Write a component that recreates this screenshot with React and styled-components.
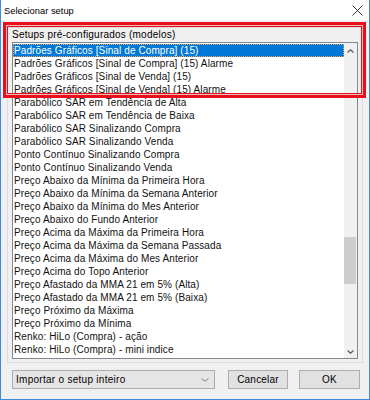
import React from "react";
import styled, { createGlobalStyle } from "styled-components";

const Global = createGlobalStyle`
  html, body { margin: 0; padding: 0; background: #f0f0f0; }
  * { box-sizing: border-box; }
`;

const items = [
  "Padrões Gráficos [Sinal de Compra] (15)",
  "Padrões Gráficos [Sinal de Compra] (15) Alarme",
  "Padrões Gráficos [Sinal de Venda] (15)",
  "Padrões Gráficos [Sinal de Venda] (15) Alarme",
  "Parabólico SAR em Tendência de Alta",
  "Parabólico SAR em Tendência de Baixa",
  "Parabólico SAR Sinalizando Compra",
  "Parabólico SAR Sinalizando Venda",
  "Ponto Contínuo Sinalizando Compra",
  "Ponto Contínuo Sinalizando Venda",
  "Preço Abaixo da Mínima da Primeira Hora",
  "Preço Abaixo da Mínima da Semana Anterior",
  "Preço Abaixo da Mínima do Mes Anterior",
  "Preço Abaixo do Fundo Anterior",
  "Preço Acima da Máxima da Primeira Hora",
  "Preço Acima da Máxima da Semana Passada",
  "Preço Acima da Máxima do Mes Anterior",
  "Preço Acima do Topo Anterior",
  "Preço Afastado da MMA 21 em 5% (Alta)",
  "Preço Afastado da MMA 21 em 5% (Baixa)",
  "Preço Próximo da Máxima",
  "Preço Próximo da Mínima",
  "Renko: HiLo (Compra) - ação",
  "Renko: HiLo (Compra) - mini indice",
];

const Window = styled.div`
  position: relative;
  width: 370px;
  height: 400px;
  background: #f0f0f0;
  border-left: 1px solid #3a8ddb;
  border-right: 1px solid #3a8ddb;
  border-bottom: 1px solid #3a8ddb;
  display: flex;
  flex-direction: column;
  font-family: "Liberation Sans", Arial, sans-serif;
  color: #000;
`;

const TitleBar = styled.div`
  height: 21px;
  background: #fff;
  display: flex;
  align-items: center;
  justify-content: space-between;
  padding: 0 6px 0 3px;
  font-family: "Liberation Sans", Arial, sans-serif;
  font-size: 9.4px;
  color: #000;
`;

const Body = styled.div`
  flex: 1;
  display: flex;
  flex-direction: column;
  padding: 7px 6px 10px 6px;
`;

const Group = styled.div`
  border: 1px solid #dcdcdc;
  padding: 1px 4px 3px 4px;
  display: flex;
  flex-direction: column;
`;

const GroupLabel = styled.div`
  font-size: 10px;
  letter-spacing: 0.22px;
  line-height: 12px;
  height: 12px;
  margin-bottom: 1px;
`;

const ListBox = styled.div`
  height: 317px;
  border: 1px solid #828790;
  background: #fff;
  display: grid;
  grid-template-columns: 1fr 13px;
  overflow: hidden;
`;

const Rows = styled.div`
  padding-top: 1px;
  display: flex;
  flex-direction: column;
`;

const Row = styled.div`
  height: 13px;
  line-height: 11px;
  font-size: 10px;
  letter-spacing: 0.1px;
  padding-left: ${(p) => (p.$selected ? "0px" : "1px")};
  white-space: nowrap;
  background: ${(p) => (p.$selected ? "#0078d7" : "transparent")};
  color: ${(p) => (p.$selected ? "#fff" : "#111")};
  border: 1px ${(p) => (p.$selected ? "dotted #f0a35c" : "solid transparent")};
  border-left-width: ${(p) => (p.$selected ? "1px" : "0")};
`;

const ScrollBar = styled.div`
  background: #f0f0f0;
  display: flex;
  flex-direction: column;
  padding-top: 1px;
`;

const ScrollBtn = styled.div`
  height: 13px;
  display: flex;
  align-items: center;
  justify-content: center;
`;

const Track = styled.div`
  flex: 1;
  display: flex;
  flex-direction: column;
  padding-top: 180px;
`;

const Thumb = styled.div`
  width: 12px;
  height: 47px;
  background: #cdcdcd;
`;

const Footer = styled.div`
  display: flex;
  margin-top: 7px;
  padding-left: 5px;
  height: 19px;
`;

const Select = styled.div`
  width: 203px;
  height: 19px;
  background: #e5e5e5;
  border: 1px solid #acacac;
  display: flex;
  align-items: center;
  justify-content: space-between;
  padding: 0 5px 0 3px;
  font-size: 10px;
  letter-spacing: 0.28px;
`;

const Button = styled.div`
  width: ${(p) => p.$w}px;
  height: 19px;
  margin-left: ${(p) => p.$ml}px;
  background: #e1e1e1;
  border: 1px solid #adadad;
  display: flex;
  align-items: center;
  justify-content: center;
  font-size: 10px;
  letter-spacing: 0.2px;
`;

const Highlight = styled.div`
  position: absolute;
  left: 2px;
  top: 22px;
  width: 363px;
  height: 76px;
  border: 3px solid #e5101c;
  box-shadow: inset 0 0 0 1px #f7b5b5, inset 0 0 0 2px #e5101c;
  pointer-events: none;
`;

const Chevron = ({ up, color = "#606060", w = 7, h = 4, sw = 1.3 }) => (
  <svg width={w} height={h} viewBox={`0 0 ${w} ${h}`}>
    <polyline
      points={up ? `0.5,${h - 0.5} ${w / 2},0.8 ${w - 0.5},${h - 0.5}` : `0.5,0.5 ${w / 2},${h - 0.8} ${w - 0.5},0.5`}
      fill="none"
      stroke={color}
      strokeWidth={sw}
    />
  </svg>
);

export default function App() {
  return (
    <>
      <Global />
      <Window>
        <TitleBar>
          <span>Selecionar setup</span>
          <svg width="11" height="11" viewBox="0 0 11 11">
            <path d="M0.5 0.5 L10.5 10.5 M10.5 0.5 L0.5 10.5" stroke="#222" strokeWidth="0.9" />
          </svg>
        </TitleBar>
        <Body>
          <Group>
            <GroupLabel>Setups pré-configurados (modelos)</GroupLabel>
            <ListBox>
              <Rows>
                {items.map((t, i) => (
                  <Row key={t} $selected={i === 0}>
                    {t}
                  </Row>
                ))}
              </Rows>
              <ScrollBar>
                <ScrollBtn>
                  <Chevron up />
                </ScrollBtn>
                <Track>
                  <Thumb />
                </Track>
                <ScrollBtn>
                  <Chevron />
                </ScrollBtn>
              </ScrollBar>
            </ListBox>
          </Group>
          <Footer>
            <Select>
              <span>Importar o setup inteiro</span>
              <Chevron color="#777" w={8} h={4} sw={0.9} />
            </Select>
            <Button $w={60} $ml={13}>Cancelar</Button>
            <Button $w={61} $ml={11}>OK</Button>
          </Footer>
        </Body>
        <Highlight />
      </Window>
    </>
  );
}
